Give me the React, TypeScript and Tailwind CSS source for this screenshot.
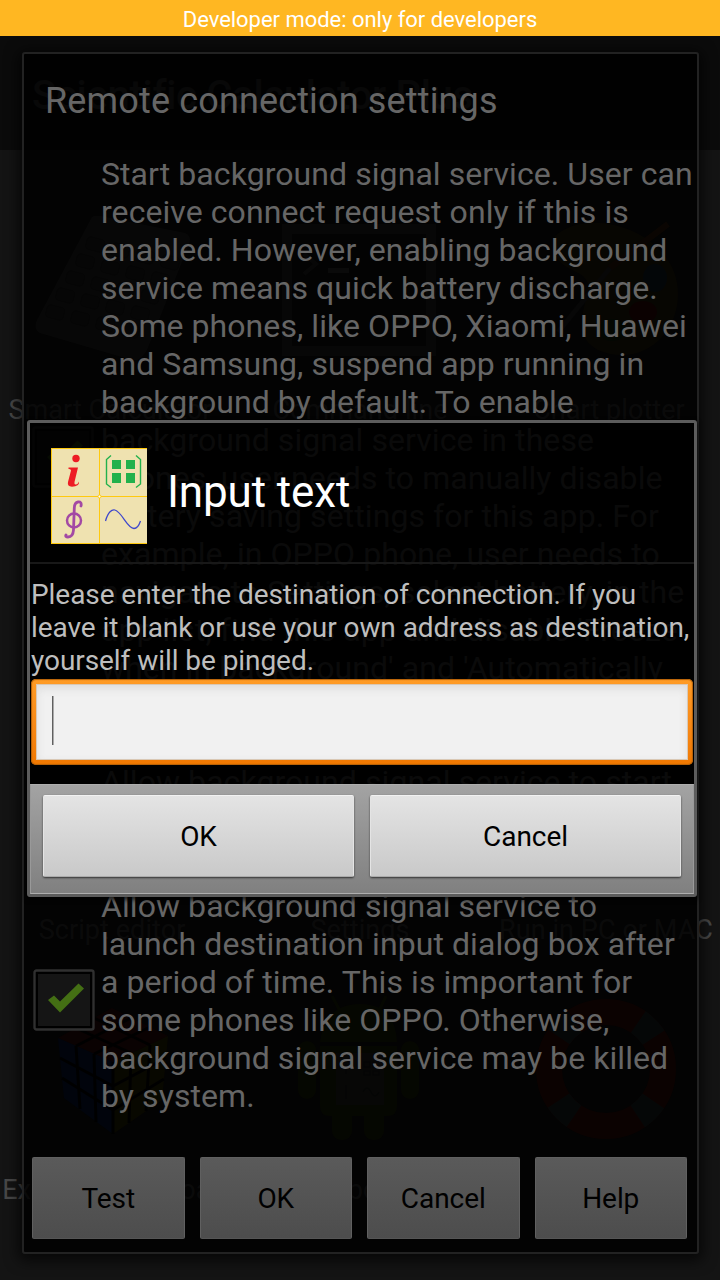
import type { ReactNode } from "react";

const signalLines = [
  "Start background signal service. User can",
  "receive connect request only if this is",
  "enabled. However, enabling background",
  "service means quick battery discharge.",
  "Some phones, like OPPO, Xiaomi, Huawei",
  "and Samsung, suspend app running in",
  "background by default. To enable",
  "background signal service in these",
  "phones, user needs to manually disable",
  "battery saving settings for this app. For",
  "example, in OPPO phone, user needs to",
  "navigate to Settings, select battery, in the",
  "app list, find this app and disable 'Freeze",
  "when in background' and 'Automatically",
];

const launchLines = [
  "Allow background signal service to",
  "launch destination input dialog box after",
  "a period of time. This is important for",
  "some phones like OPPO. Otherwise,",
  "background signal service may be killed",
  "by system.",
];

function Lines({ lines }: { lines: string[] }) {
  return (
    <div className="text-[32px] leading-[38px] tracking-[0.07px] text-[#666]">
      {lines.map((line) => (
        <div key={line} className="whitespace-nowrap">{line}</div>
      ))}
    </div>
  );
}

function CheckBox() {
  return (
    <svg viewBox="0 0 62 62" className="size-[62px] shrink-0">
      <rect x="1.5" y="1.5" width="59" height="59" rx="2" fill="#000" stroke="#303030" strokeWidth="2.4" />
      <rect x="5" y="5" width="52" height="52" fill="#151515" />
      <path d="M15 31 L21 26.5 L27 32.5 L45.500 14.500 L51 19.500 L27 43.500 Z" fill="#446f14" />
    </svg>
  );
}

function Keypad() {
  const keys = [];
  for (let r = 0; r < 5; r++) for (let c = 0; c < 4; c++) keys.push([r, c]);
  return (
    <svg viewBox="0 0 240 190" className="h-[190px] w-[240px]">
      <path d="M92 31 Q95 29 100 30 L185 47 Q192 50 189 58 L147 164 Q140 176 132 174 L40 147 Q33 143 37 134 Z" fill="#333" />
      {keys.map(([r, c]) => (
        <rect key={`${r}-${c}`} x="0" y="0" width="18" height="13" rx="4" fill="#2b2b2b" stroke="#222"
          transform={`translate(${88 + c * 25 - r * 10} ${50 + c * 6 + r * 17}) rotate(14)`} />
      ))}
    </svg>
  );
}

function Terminal() {
  return (
    <svg viewBox="0 0 240 190" className="h-[190px] w-[240px]">
      <rect x="47" y="43" width="144" height="122" fill="none" stroke="#2e2e2e" strokeWidth="10" />
      <path d="M64 68 L76 78 L64 88" fill="none" stroke="#333" strokeWidth="4" />
      <rect x="88" y="82" width="21" height="5" fill="#484848" />
    </svg>
  );
}

function Palette() {
  return (
    <svg viewBox="0 0 240 190" className="h-[190px] w-[240px]">
      <path d="M75 50 C110 18 198 46 198 108 C198 150 160 182 118 164 C90 148 106 124 108 100 C108 80 66 88 75 50Z" fill="#33280f" />
      <ellipse cx="175" cy="92" rx="12" ry="14" fill="#16293a" />
      <ellipse cx="163" cy="126" rx="14" ry="11" fill="#4a0c0c" />
      <ellipse cx="132" cy="144" rx="14" ry="11" fill="#163012" />
      <path d="M188 38 L130 82" stroke="#47250f" strokeWidth="6" />
      <path d="M130 82 L78 146" stroke="#2e2e2e" strokeWidth="5" />
    </svg>
  );
}

function Cube() {
  return (
    <svg viewBox="0 0 240 190" className="h-[190px] w-[240px]">
      <path d="M58 72 L112 42 L168 70 L113 96Z" fill="#450e0e" />
      <path d="M58 72 L113 96 L113 168 L64 132Z" fill="#081d52" />
      <path d="M113 96 L168 70 L162 134 L113 168Z" fill="#3b3506" />
      <path d="M76 80 L80 143 M94 88 L96 156 M60 92 L113 120 L166 92 M62 112 L113 144 L164 113 M131 87 L129 157 M150 79 L146 145 M76 62 L131 87 M94 52 L150 79 M76 80 L131 52 M94 88 L150 61 M113 96 V168" stroke="#050505" strokeWidth="3" fill="none" />
    </svg>
  );
}

function Robot() {
  return (
    <svg viewBox="0 0 240 190" className="h-[190px] w-[240px]">
      <path d="M80 76 Q85 38 120 38 Q155 38 157 76Z M80 80 H157 V140 Q157 150 147 150 H90 Q80 150 80 140Z" fill="#272f0c" />
      <path d="M92 30 L100 45 M146 30 L139 45" stroke="#272f0c" strokeWidth="3" />
      <g fill="#272f0c">
        <rect x="58" y="75" width="18" height="58" rx="9" />
        <rect x="161" y="75" width="18" height="58" rx="9" />
        <rect x="92" y="140" width="20" height="34" rx="9" />
        <rect x="124" y="140" width="20" height="34" rx="9" />
      </g>
      <rect x="96" y="87" width="48" height="52" fill="#34342a" />
      <path d="M102 96 h8 M106 96 v12 M106 119 v14 M124 96 h6 v5 h-6z M133 96 h6 v5 h-6z M124 105 h6 v4 h-6z M133 105 h6 v4 h-6z M123 126 q4 -8 8 0 t8 0" fill="none" stroke="#1c2320" strokeWidth="1.500" />
    </svg>
  );
}

function LifeRing() {
  return (
    <svg viewBox="0 0 240 190" className="h-[190px] w-[240px]">
      <circle cx="126" cy="103" r="57" fill="none" stroke="#4b0f0a" strokeWidth="26" />
      <circle cx="126" cy="103" r="57" fill="none" stroke="#263232" strokeWidth="26" strokeDasharray="22 67.535" strokeDashoffset="-33.8" />
    </svg>
  );
}

function Tile({ label, shift, children }: { label: string; shift: string; children?: ReactNode }) {
  return (
    <div className="flex h-[260px] flex-col items-center">
      <div className="h-[208px] w-[240px]">{children}</div>
      <div className={`text-[27px] leading-[33px] tracking-[0.07px] whitespace-nowrap ${shift}`}>{label}</div>
    </div>
  );
}

function HomeScreen() {
  return (
    <div className="flex h-full flex-col bg-[#141414] text-[#484848]">
      <div className="flex h-[114px] shrink-0 items-center bg-[#0b0b0b] pt-[5px] pl-8 text-[40px] font-medium tracking-[-0.3px] text-[#363636]">
        Scientific Calculator Plus
      </div>
      <div className="grid shrink-0 grid-cols-3 pt-[36px]">
        <Tile label="Smart Calculator" shift="mr-[20px]"><Keypad /></Tile>
        <Tile label="Command line" shift=""><Terminal /></Tile>
        <Tile label="Chart plotter" shift="ml-[18px]"><Palette /></Tile>
        <Tile label="" shift="" />
        <Tile label="" shift="" />
        <Tile label="" shift="" />
        <Tile label="Script editor" shift="mr-[16px]" />
        <Tile label="Settings" shift="" />
        <Tile label="Run in PC or MAC" shift="ml-[12px]" />
        <Tile label="Explore and reload" shift="mr-[12px]"><Cube /></Tile>
        <Tile label="About MP" shift="ml-[60px]"><Robot /></Tile>
        <Tile label="" shift=""><LifeRing /></Tile>
      </div>
    </div>
  );
}

function SettingsDialog() {
  return (
    <div className="flex h-[1202px] w-[677px] flex-col rounded-[3px] border-[2.500px] border-[#222] bg-black/85 shadow-[0_3px_14px_4px_rgba(0,0,0,0.65)]">
      <h1 className="mt-[24px] ml-[21px] h-[77px] shrink-0 text-[36px] leading-[46px] tracking-[0.15px] text-[#666]">
        Remote connection settings
      </h1>
      <div className="flex h-[608px] shrink-0 items-start">
        <div className="flex w-[77px] justify-center pt-[271px]"><CheckBox /></div>
        <Lines lines={signalLines} />
      </div>
      <div className="flex h-[124px] shrink-0 pl-[77px]">
        <Lines lines={["Allow background signal service to start"]} />
      </div>
      <div className="flex h-[228px] shrink-0 items-center">
        <div className="flex w-[77px] pb-[2px] pl-[9px]"><CheckBox /></div>
        <Lines lines={launchLines} />
      </div>
      <div className="mt-[42px] grid grid-cols-4 gap-[15px] pr-[10px] pl-[8px]">
        {["Test", "OK", "Cancel", "Help"].map((label) => (
          <button key={label} className="h-[82px] rounded-[2px] border border-[#606060] border-b-[#555] bg-linear-to-b from-[#5a5a5a] to-[#4d4d4d] pt-px text-[28px] tracking-[-0.07px] text-black">
            {label}
          </button>
        ))}
      </div>
    </div>
  );
}

function AppIcon() {
  return (
    <svg viewBox="0 0 96 96" className="size-[96px]">
      <rect width="96" height="96" rx="1" fill="#efe2b0" />
      <path d="M0.500 96 V0.500 H96 M48.500 0 V96 M0 48.500 H96 M0 95.500 H96" fill="none" stroke="#ffc90e" />
      <circle cx="48.500" cy="48.500" r="1.500" fill="#fff" stroke="#ffc90e" />
      <circle cx="25" cy="10.500" r="3.700" fill="#ed1c24" />
      <path d="M17.500 19.500 H27 L23.500 34 Q23 37 25 36.500 Q27 36 28 33.500 Q28.500 38.500 21 38.700 Q16 38.500 17 34 L20 22.500 Q20 20.700 17.500 21Z" fill="#ed1c24" />
      <path d="M60 7.500 L55.500 11.500 V36 L60 39.500 M85 7.500 L89.500 11.500 V36 L85 39.500" fill="none" stroke="#22b14c" strokeWidth="1.400" />
      <path d="M61 12 h9 v9 h-9z M75 12 h9 v9 h-9z M61 25 h9 v10 h-9z M75 25 h9 v10 h-9z" fill="#22b14c" />
      <circle cx="23" cy="72.500" r="7" fill="none" stroke="#a349a4" strokeWidth="2.500" />
      <path d="M30 58 Q31 53.500 27 54 Q23.500 54.500 23.300 60 L22.500 82 Q22 89 17 89 Q14 89 15 87" fill="none" stroke="#a349a4" strokeWidth="2.800" strokeLinecap="round" />
      <path d="M54.500 73 C57 64 61 61 64 62 C71 64 76 80 83 80.500 Q87 80.500 89.500 73" fill="none" stroke="#3f48cc" strokeWidth="1.300" />
    </svg>
  );
}

function InputDialog() {
  return (
    <div className="flex h-[477px] w-[670px] flex-col rounded-[3px] border-[3px] border-[#5c5c5c] bg-black/90 shadow-[0_2px_4px_1px_rgba(0,0,0,0.7)]">
      <div className="flex h-[141px] shrink-0 items-center border-b-2 border-[#181818] pt-[7px] pl-[21px]">
        <AppIcon />
        <h2 className="ml-[20px] pb-[8px] text-[44px] leading-[52px] tracking-[-0.12px] text-white">Input text</h2>
      </div>
      <div className="h-[220px] shrink-0 pt-[14px] pl-px">
        <div className="text-[28px] leading-[33px] tracking-[-0.06px] whitespace-nowrap text-[#bebebe]">
          <div>Please enter the destination of connection. If you</div>
          <div>leave it blank or use your own address as destination,</div>
          <div>yourself will be pinged.</div>
        </div>
        <div className="mt-[2px] h-[86px] w-[662px] rounded-[5px] bg-linear-to-b from-[#ff9c26] to-[#f07800] p-[5px] shadow-[inset_0_0_1px_1px_#b36008]">
          <div className="flex h-[76px] items-center border border-[#d9c8b5] bg-[#f1f1f1] pl-[15px] shadow-[inset_0_4px_9px_#dedede]">
            <div className="mb-[3px] h-[49px] w-[2px] border-l border-[#606060] bg-[#aaa]" />
          </div>
        </div>
      </div>
      <div className="grid flex-1 grid-cols-2 gap-[16px] border-x border-t border-b border-x-[#999] border-t-[#aeaeae] border-b-[#aeaeae] bg-linear-to-b from-[#a3a3a3] to-[#808080] px-[12px] pt-[10px]">
        {["OK", "Cancel"].map((label) => (
          <button key={label} className="h-[82px] rounded-[2px] border border-[#e4e4e4] border-t-[#f2f2f2] border-b-[#aaa] bg-linear-to-b from-[#e4e4e4] to-[#c9c9c9] pt-px text-[28px] tracking-[-0.07px] text-black shadow-[0_1px_2px_#333]">
            {label}
          </button>
        ))}
      </div>
    </div>
  );
}

export default function App() {
  return (
    <div className="relative flex h-[1280px] w-[720px] flex-col overflow-hidden bg-black font-['Roboto',sans-serif]">
      <div className="flex h-[36px] shrink-0 items-center justify-center bg-[#ffb722] pt-[3px] text-[22px] leading-none tracking-[-0.03px] text-white">
        Developer mode: only for developers
      </div>
      <div className="min-h-0 flex-1 overflow-hidden"><HomeScreen /></div>
      <div className="absolute top-[52px] left-[22px]"><SettingsDialog /></div>
      <div className="absolute top-[420px] left-[27px]"><InputDialog /></div>
    </div>
  );
}
